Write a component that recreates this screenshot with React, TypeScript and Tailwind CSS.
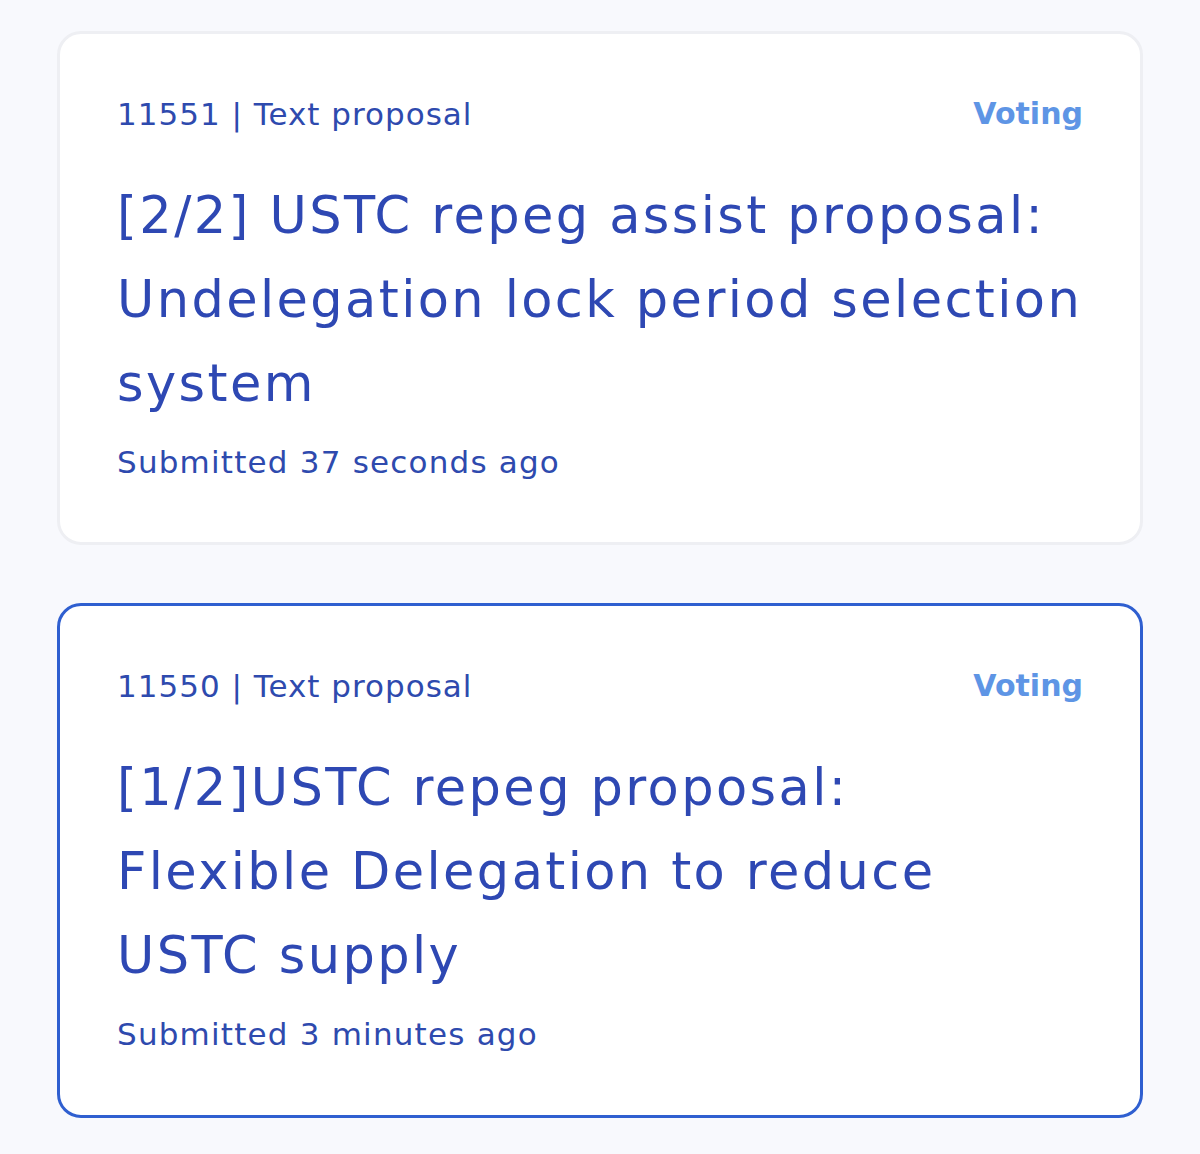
export default function App() {
  const cards = [
    {
      id: "11551",
      title: ["[2/2] USTC repeg assist proposal:", "Undelegation lock period selection", "system"],
      time: "Submitted 37 seconds ago",
      selected: false,
    },
    {
      id: "11550",
      title: ["[1/2]USTC repeg proposal:", "Flexible Delegation to reduce", "USTC supply"],
      time: "Submitted 3 minutes ago",
      selected: true,
    },
  ];
  return (
    <div
      className="min-h-[1154px] w-[1200px] bg-[#f8f9fd] pt-[31px] px-[57px] flex flex-col gap-[58px]"
      style={{ fontFamily: '"DejaVu Sans", "Open Sans", sans-serif' }}
    >
      {cards.map((c) => (
        <div
          key={c.id}
          className={
            c.selected
              ? "bg-white rounded-[24px] border-[3px] border-[#2f5fd0] pl-[57px] pr-[57px] pt-[60px] pb-[60px] h-[515px]"
              : "bg-white rounded-[24px] border-[3px] border-[#eeeff3] pl-[57px] pr-[57px] pt-[60px] pb-[60px] h-[514px]"
          }
        >
          <div className="flex justify-between items-center h-[40px]">
            <span className="text-[31px] tracking-[1px] text-[#2e4aae] leading-[40px]">{c.id} | Text proposal</span>
            <span className="text-[30px] font-bold text-[#5e95e5] leading-[40px]">Voting</span>
          </div>
          <div className="mt-[40px] text-[51px] tracking-[2.4px] leading-[84px] text-[#2e48b3] whitespace-nowrap">
            {c.title.map((t) => (
              <div key={t}>{t}</div>
            ))}
          </div>
          <div className="mt-[16px] text-[31px] tracking-[1.2px] leading-[40px] text-[#2e4aae]">{c.time}</div>
        </div>
      ))}
    </div>
  );
}
